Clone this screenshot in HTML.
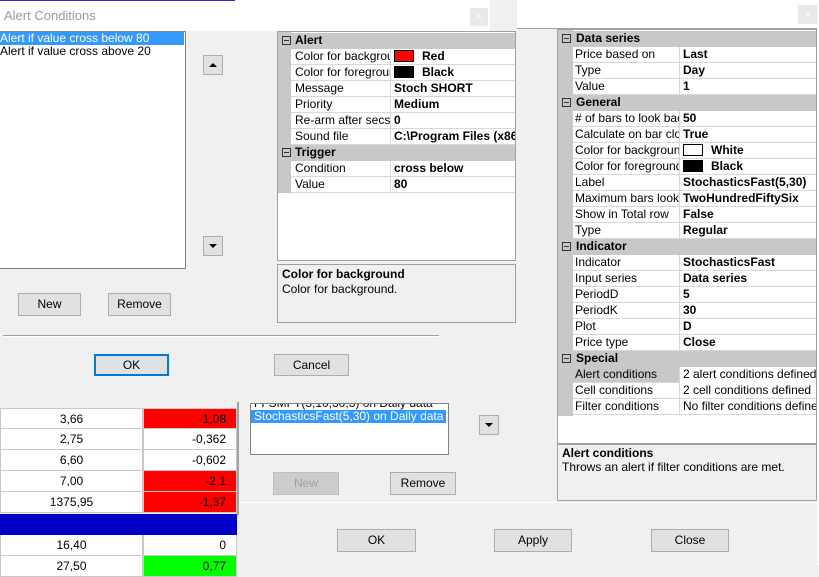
<!DOCTYPE html><html><head><style>
*{box-sizing:border-box;margin:0;padding:0}
body{width:819px;height:565px;overflow:hidden;background:#f0f0f0;font-family:"Liberation Sans",sans-serif;font-size:12px;color:#000;position:relative}
.a{position:absolute}
.btn{position:absolute;background:#e1e1e1;border:1px solid #adadad;text-align:center;line-height:20px}
.pg{position:absolute;background:#fff;border:1px solid #a0a0a0;overflow:hidden}
.r{position:absolute;left:0;right:0;height:16px;border-bottom:1px solid #d8d8d8;white-space:nowrap;line-height:15px}
.h{position:absolute;left:0;right:0;height:16px;background:#c8c8c8;font-weight:bold;line-height:15px;white-space:nowrap}
.h i{position:absolute;left:4px;top:3px;width:9px;height:9px;border:1px solid #333;font-style:normal}
.h i:after{content:"";position:absolute;left:1px;top:3px;width:5px;height:1px;background:#333}
.l{position:absolute;top:0;overflow:hidden;height:15px}
.v{position:absolute;top:0;font-weight:bold;border-left:1px solid #d8d8d8;padding-left:3px;height:16px;right:0}
.sw{display:inline-block;width:20px;height:12px;vertical-align:-2px;margin-right:8px;border:1px solid #000}
.td{position:absolute;height:21px;border:1px solid #c8c8c8;border-top:none;text-align:right;padding-right:10px;line-height:20px;background:#fff}
.arr{position:absolute;background:#e1e1e1;border:1px solid #adadad;width:20px;height:20px}
</style></head><body>
<div class="a" style="left:517px;top:0;width:302px;height:29px;background:#fff"></div>
<div class="a" style="left:798px;top:5px;width:20px;height:19px;background:#e8e8e8;color:#fff;text-align:center;line-height:19px;font-size:10px">x</div>
<div class="a" style="left:490px;top:28px;width:329px;height:1px;background:#a0a0a0"></div>
<div class="pg" style="left:557px;top:29px;width:260px;height:416px;background:#fff">
 <div class="a" style="left:0;top:0;width:15px;height:386px;background:#c8c8c8"></div>
 <div class="h" style="top:1px"><i></i><span style="margin-left:18px">Data series</span></div>
 <div class="r" style="top:17px;left:15px"><span class="l" style="left:2px;width:104px">Price based on</span><span class="v" style="left:106px">Last</span></div>
 <div class="r" style="top:33px;left:15px"><span class="l" style="left:2px;width:104px">Type</span><span class="v" style="left:106px">Day</span></div>
 <div class="r" style="top:49px;left:15px"><span class="l" style="left:2px;width:104px">Value</span><span class="v" style="left:106px">1</span></div>
 <div class="h" style="top:65px"><i></i><span style="margin-left:18px">General</span></div>
 <div class="r" style="top:81px;left:15px"><span class="l" style="left:2px;width:104px"># of bars to look back</span><span class="v" style="left:106px">50</span></div>
 <div class="r" style="top:97px;left:15px"><span class="l" style="left:2px;width:104px">Calculate on bar close</span><span class="v" style="left:106px">True</span></div>
 <div class="r" style="top:113px;left:15px"><span class="l" style="left:2px;width:104px">Color for background</span><span class="v" style="left:106px"><span class="sw" style="background:#fff"></span>White</span></div>
 <div class="r" style="top:129px;left:15px"><span class="l" style="left:2px;width:104px">Color for foreground</span><span class="v" style="left:106px"><span class="sw" style="background:#000"></span>Black</span></div>
 <div class="r" style="top:145px;left:15px"><span class="l" style="left:2px;width:104px">Label</span><span class="v" style="left:106px">StochasticsFast(5,30)</span></div>
 <div class="r" style="top:161px;left:15px"><span class="l" style="left:2px;width:104px">Maximum bars look back</span><span class="v" style="left:106px">TwoHundredFiftySix</span></div>
 <div class="r" style="top:177px;left:15px"><span class="l" style="left:2px;width:104px">Show in Total row</span><span class="v" style="left:106px">False</span></div>
 <div class="r" style="top:193px;left:15px"><span class="l" style="left:2px;width:104px">Type</span><span class="v" style="left:106px">Regular</span></div>
 <div class="h" style="top:209px"><i></i><span style="margin-left:18px">Indicator</span></div>
 <div class="r" style="top:225px;left:15px"><span class="l" style="left:2px;width:104px">Indicator</span><span class="v" style="left:106px">StochasticsFast</span></div>
 <div class="r" style="top:241px;left:15px"><span class="l" style="left:2px;width:104px">Input series</span><span class="v" style="left:106px">Data series</span></div>
 <div class="r" style="top:257px;left:15px"><span class="l" style="left:2px;width:104px">PeriodD</span><span class="v" style="left:106px">5</span></div>
 <div class="r" style="top:273px;left:15px"><span class="l" style="left:2px;width:104px">PeriodK</span><span class="v" style="left:106px">30</span></div>
 <div class="r" style="top:289px;left:15px"><span class="l" style="left:2px;width:104px">Plot</span><span class="v" style="left:106px">D</span></div>
 <div class="r" style="top:305px;left:15px"><span class="l" style="left:2px;width:104px">Price type</span><span class="v" style="left:106px">Close</span></div>
 <div class="h" style="top:321px"><i></i><span style="margin-left:18px">Special</span></div>
 <div class="r" style="top:337px;left:15px;background:#c8c8c8"><span class="l" style="left:2px;width:104px">Alert conditions</span><span class="v" style="left:106px;font-weight:normal;background:#fff">2 alert conditions defined</span></div>
 <div class="r" style="top:353px;left:15px"><span class="l" style="left:2px;width:104px">Cell conditions</span><span class="v" style="left:106px;font-weight:normal">2 cell conditions defined</span></div>
 <div class="r" style="top:369px;left:15px"><span class="l" style="left:2px;width:104px">Filter conditions</span><span class="v" style="left:106px;font-weight:normal">No filter conditions defined</span></div>
</div>
<div class="a" style="left:557px;top:443px;width:260px;height:58px;border:1px solid #a0a0a0;padding:2px 4px;line-height:14px"><b>Alert conditions</b><br>Throws an alert if filter conditions are met.</div>
<div class="a" style="left:817px;top:0;width:2px;height:565px;background:#fff"></div>
<div class="a" style="left:237px;top:400px;width:2px;height:115px;background:#a0a0a0"></div>
<div class="a" style="left:250px;top:403px;width:199px;height:52px;background:#fff;border:1px solid #828282;overflow:hidden">
 <div style="margin-top:-7px;line-height:13px;padding-left:3px">FFSMFT(5,10,30,3) on Daily data</div>
 <div style="background:#3399ff;color:#fff;line-height:13px;padding-left:3px;margin-right:2px">StochasticsFast(5,30) on Daily data</div>
</div>
<div class="arr" style="left:479px;top:415px"><svg width="18" height="18"><path d="M5 7h8l-4 4z" fill="#000"/></svg></div>
<div class="btn" style="left:273px;top:472px;width:66px;height:23px;background:#ccc;border-color:#bfbfbf;color:#a0a0a0">New</div>
<div class="btn" style="left:390px;top:472px;width:66px;height:23px">Remove</div>
<div class="a" style="left:239px;top:502px;width:578px;height:1px;background:#fff"></div>
<div class="btn" style="left:337px;top:529px;width:79px;height:23px">OK</div>
<div class="btn" style="left:494px;top:529px;width:78px;height:23px">Apply</div>
<div class="btn" style="left:651px;top:529px;width:78px;height:23px">Close</div>
<div class="td" style="left:0;top:408px;width:143px;border-top:1px solid #c8c8c8;text-align:center;padding:0">3,66</div>
<div class="td" style="left:143px;top:408px;width:94px;border-top:1px solid #c8c8c8;background:#f00">-1,08</div>
<div class="td" style="left:0;top:429px;width:143px;text-align:center;padding:0">2,75</div>
<div class="td" style="left:143px;top:429px;width:94px">-0,362</div>
<div class="td" style="left:0;top:450px;width:143px;text-align:center;padding:0">6,60</div>
<div class="td" style="left:143px;top:450px;width:94px">-0,602</div>
<div class="td" style="left:0;top:471px;width:143px;text-align:center;padding:0">7,00</div>
<div class="td" style="left:143px;top:471px;width:94px;background:#f00">-2,1</div>
<div class="td" style="left:0;top:492px;width:143px;text-align:center;padding:0">1375,95</div>
<div class="td" style="left:143px;top:492px;width:94px;background:#f00">-1,37</div>
<div class="a" style="left:0;top:514px;width:237px;height:21px;background:#0000c8"></div>
<div class="td" style="left:0;top:535px;width:143px;text-align:center;padding:0">16,40</div>
<div class="td" style="left:143px;top:535px;width:94px">0</div>
<div class="td" style="left:0;top:556px;width:143px;text-align:center;padding:0">27,50</div>
<div class="td" style="left:143px;top:556px;width:94px;background:#0f0">0,77</div>
<div class="a" style="left:0;top:0;width:517px;height:402px;background:#f0f0f0"></div>
<div class="a" style="left:0;top:0;width:490px;height:31px;background:#fff"></div>
<div class="a" style="left:0;top:0;width:235px;height:1px;background:#3030c0"></div>
<div class="a" style="left:4px;top:8px;color:#999;font-size:13px">Alert Conditions</div>
<div class="a" style="left:470px;top:8px;width:18px;height:18px;background:#e8e8e8;color:#fff;text-align:center;font-size:10px;line-height:18px">x</div>
<div class="a" style="left:-1px;top:31px;width:187px;height:238px;background:#fff;border:1px solid #828282">
 <div style="background:#3399ff;color:#fff;line-height:13px;margin-right:1px">Alert if value cross below 80</div>
 <div style="line-height:13px">Alert if value cross above 20</div>
</div>
<div class="arr" style="left:203px;top:55px"><svg width="18" height="18"><path d="M5 11h8l-4-4z" fill="#000"/></svg></div>
<div class="arr" style="left:203px;top:236px"><svg width="18" height="18"><path d="M5 7h8l-4 4z" fill="#000"/></svg></div>
<div class="pg" style="left:277px;top:31px;width:239px;height:230px">
 <div class="a" style="left:0;top:0;width:13px;height:161px;background:#c8c8c8"></div>
 <div class="h" style="top:1px"><i></i><span style="margin-left:17px">Alert</span></div>
 <div class="r" style="top:17px;left:13px"><span class="l" style="left:4px;width:95px">Color for background</span><span class="v" style="left:99px;font-weight:normal"><span class="sw" style="background:#f00"></span><b>Red</b></span></div>
 <div class="r" style="top:33px;left:13px"><span class="l" style="left:4px;width:95px">Color for foreground</span><span class="v" style="left:99px"><span class="sw" style="background:#000"></span>Black</span></div>
 <div class="r" style="top:49px;left:13px"><span class="l" style="left:4px;width:95px">Message</span><span class="v" style="left:99px">Stoch SHORT</span></div>
 <div class="r" style="top:65px;left:13px"><span class="l" style="left:4px;width:95px">Priority</span><span class="v" style="left:99px">Medium</span></div>
 <div class="r" style="top:81px;left:13px"><span class="l" style="left:4px;width:95px">Re-arm after secs</span><span class="v" style="left:99px">0</span></div>
 <div class="r" style="top:97px;left:13px"><span class="l" style="left:4px;width:95px">Sound file</span><span class="v" style="left:99px">C:\Program Files (x86)</span></div>
 <div class="h" style="top:113px"><i></i><span style="margin-left:17px">Trigger</span></div>
 <div class="r" style="top:129px;left:13px"><span class="l" style="left:4px;width:95px">Condition</span><span class="v" style="left:99px">cross below</span></div>
 <div class="r" style="top:145px;left:13px"><span class="l" style="left:4px;width:95px">Value</span><span class="v" style="left:99px">80</span></div>
</div>
<div class="a" style="left:277px;top:264px;width:239px;height:59px;border:1px solid #a0a0a0;padding:2px 4px;line-height:15px"><b>Color for background</b><br>Color for background.</div>
<div class="btn" style="left:18px;top:293px;width:63px;height:23px">New</div>
<div class="btn" style="left:108px;top:293px;width:63px;height:23px">Remove</div>
<div class="a" style="left:3px;top:335px;width:436px;height:1px;background:#a0a0a0"></div>
<div class="a" style="left:3px;top:336px;width:436px;height:1px;background:#fff"></div>
<div class="btn" style="left:94px;top:354px;width:75px;height:22px;border:2px solid #0078d7;line-height:18px">OK</div>
<div class="btn" style="left:274px;top:354px;width:75px;height:22px">Cancel</div>
</body></html>
